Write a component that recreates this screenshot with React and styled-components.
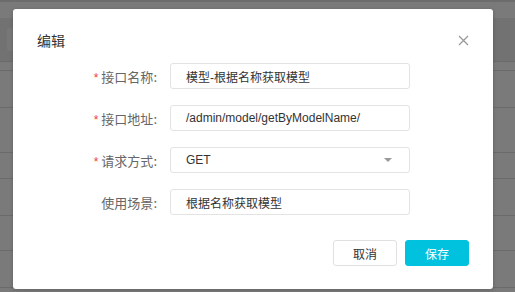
import React from "react";
import styled, { createGlobalStyle } from "styled-components";

const Global = createGlobalStyle`
  html, body { margin: 0; padding: 0; }
  body {
    width: 515px; height: 292px; overflow: hidden;
    font-family: "Liberation Sans", "Noto Sans CJK SC", sans-serif;
    background: #7a7a7a;
  }
`;

const Page = styled.div`
  position: relative;
  width: 515px;
  height: 292px;
  background: #7a7a7a;
  overflow: hidden;
`;

const TopStrip = styled.div`
  height: 2px;
  background: #6c6c6c;
`;

const Spacer = styled.div`
  height: 16px;
`;

const Toolbar = styled.div`
  height: 43px;
  background: #727272;
  display: flex;
  align-items: center;
  padding-left: 7px;
  border-bottom: 1px solid #6b6b6b;
`;

const SearchBox = styled.div`
  width: 40px;
  height: 23px;
  border-radius: 3px;
  background: #787878;
`;

const Row = styled.div`
  height: ${(p) => p.$h}px;
  border-bottom: 1px solid #6a6a6a;
`;

const Overlay = styled.div`
  position: absolute;
  inset: 0;
  padding: 9px 0 0 13px;
`;

const Modal = styled.div`
  width: 480px;
  height: 280px;
  box-sizing: border-box;
  background: #fff;
  border-radius: 3px;
  box-shadow: 0 1px 4px rgba(0, 0, 0, 0.2);
  display: flex;
  flex-direction: column;
`;

const Header = styled.div`
  display: flex;
  align-items: center;
  justify-content: space-between;
  padding: 20px 24px 0 24px;
  height: 22px;
`;

const Title = styled.div`
  font-family: "Noto Sans CJK SC", sans-serif;
  font-size: 14px;
  color: #333;
  line-height: 22px;
`;

const Close = styled.button`
  border: 0;
  background: none;
  padding: 0;
  width: 12px;
  height: 12px;
  display: flex;
  align-items: center;
  justify-content: center;
  cursor: pointer;
`;

const Form = styled.div`
  margin-top: 12px;
  display: flex;
  flex-direction: column;
  gap: 16px;
`;

const FormRow = styled.div`
  display: grid;
  grid-template-columns: 157px 240px;
  align-items: center;
  height: 26px;
`;

const Label = styled.label`
  display: flex;
  justify-content: flex-end;
  align-items: center;
  padding-right: 13px;
  font-family: "Noto Sans CJK SC", sans-serif;
  font-size: 13px;
  color: #666;
`;

const Star = styled.span`
  color: #f04134;
  font-family: "Liberation Sans", sans-serif;
  font-size: 12px;
  margin-right: 3px;
  position: relative;
  top: 2px;
`;

const Field = styled.div`
  height: 26px;
  box-sizing: border-box;
  border: 1px solid #e3e3e3;
  border-radius: 3px;
  display: flex;
  align-items: center;
  justify-content: space-between;
  padding: 0 16px 0 15px;
  font-size: 12px;
  color: #333;
  background: #fff;
`;

const Caret = styled.span`
  width: 0;
  height: 0;
  border-left: 4px solid transparent;
  border-right: 4px solid transparent;
  border-top: 4px solid #999;
  margin-right: 1px;
`;

const Footer = styled.div`
  margin-top: auto;
  display: flex;
  justify-content: flex-end;
  gap: 8px;
  padding: 0 24px 23px 0;
`;

const Button = styled.button`
  width: 64px;
  height: 26px;
  border-radius: 3px;
  font-family: "Noto Sans CJK SC", sans-serif;
  font-size: 12px;
  padding: 0;
  cursor: pointer;
  border: 1px solid ${(p) => (p.$primary ? "#00c1de" : "#e0e0e0")};
  background: ${(p) => (p.$primary ? "#00c1de" : "#fff")};
  color: ${(p) => (p.$primary ? "#fff" : "#333")};
`;

const rows = [
  { label: "接口名称", required: true, value: "模型-根据名称获取模型" },
  { label: "接口地址", required: true, value: "/admin/model/getByModelName/" },
  { label: "请求方式", required: true, value: "GET", select: true },
  { label: "使用场景", required: false, value: "根据名称获取模型" },
];

export default function App() {
  return (
    <Page>
      <Global />
      <TopStrip />
      <Spacer />
      <Toolbar>
        <SearchBox />
      </Toolbar>
      <Row $h={8} />
      <Row $h={36} />
      <Row $h={44} />
      <Row $h={25} />
      <Row $h={36} />
      <Row $h={34} />
      <Row $h={36} />
      <Overlay>
        <Modal>
          <Header>
            <Title>编辑</Title>
            <Close aria-label="close">
              <svg width="11" height="11" viewBox="0 0 11 11">
                <path d="M1 1 L10 10 M10 1 L1 10" stroke="#999" strokeWidth="1.3" fill="none" />
              </svg>
            </Close>
          </Header>
          <Form>
            {rows.map((r) => (
              <FormRow key={r.label}>
                <Label>
                  {r.required && <Star>*</Star>}
                  {r.label}:
                </Label>
                <Field>
                  <span>{r.value}</span>
                  {r.select && <Caret />}
                </Field>
              </FormRow>
            ))}
          </Form>
          <Footer>
            <Button>取消</Button>
            <Button $primary>保存</Button>
          </Footer>
        </Modal>
      </Overlay>
    </Page>
  );
}
